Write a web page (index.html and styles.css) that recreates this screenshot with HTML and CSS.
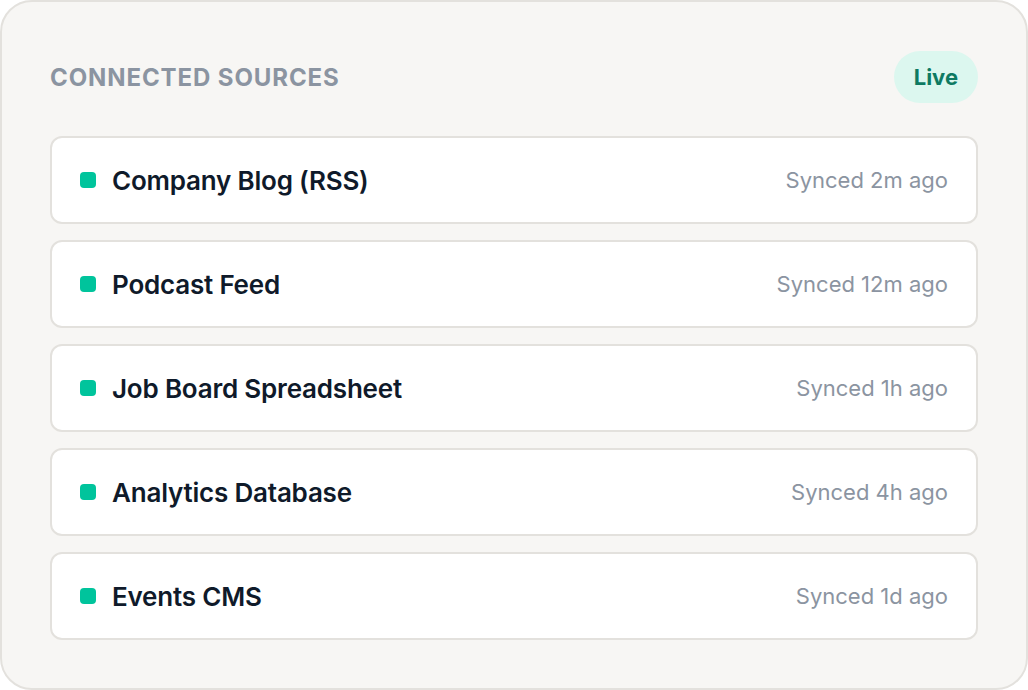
FILE: index.html
```html
<!DOCTYPE html>
<html lang="en">
<head>
<meta charset="utf-8">
<title>Connected Sources</title>
<link rel="stylesheet" href="styles.css">
</head>
<body>
<section class="card">
  <header class="card-header">
    <h2 class="title">CONNECTED SOURCES</h2>
    <span class="badge">Live</span>
  </header>
  <ul class="list">
    <li class="row"><span class="dot"></span><span class="name">Company Blog (RSS)</span><span class="sync">Synced 2m ago</span></li>
    <li class="row"><span class="dot"></span><span class="name">Podcast Feed</span><span class="sync">Synced 12m ago</span></li>
    <li class="row"><span class="dot"></span><span class="name">Job Board Spreadsheet</span><span class="sync">Synced 1h ago</span></li>
    <li class="row"><span class="dot"></span><span class="name">Analytics Database</span><span class="sync">Synced 4h ago</span></li>
    <li class="row"><span class="dot"></span><span class="name">Events CMS</span><span class="sync">Synced 1d ago</span></li>
  </ul>
</section>
</body>
</html>
```
FILE: styles.css
```css
* { box-sizing: border-box; }
html, body { margin: 0; padding: 0; background: #ffffff; }
body { font-family: Inter, "Noto Sans", sans-serif; }
.card {
  width: 1028px;
  height: 690px;
  background: #f7f6f4;
  border: 2px solid #e3e1dd;
  border-radius: 32px;
  padding: 48px;
}
.card-header {
  display: flex;
  align-items: center;
  justify-content: space-between;
  height: 54px;
  margin-bottom: 32px;
}
.title {
  margin: 0;
  font-size: 24px;
  font-weight: 700;
  color: #8b94a1;
  letter-spacing: 0.9px;
}
.badge {
  display: inline-flex;
  align-items: center;
  height: 52px;
  padding: 0 20px;
  border-radius: 26px;
  background: #dcf7ef;
  color: #0e7a62;
  font-size: 22px;
  font-weight: 700;
}
.list {
  list-style: none;
  margin: 0;
  padding: 0;
  display: flex;
  flex-direction: column;
  gap: 16px;
}
.row {
  display: flex;
  align-items: center;
  height: 88px;
  padding: 0 28px;
  background: #ffffff;
  border: 2px solid #e3e1dd;
  border-radius: 12px;
}
.dot {
  width: 16px;
  height: 16px;
  border-radius: 4px;
  background: #00c49c;
  margin-right: 16px;
  flex: none;
}
.name {
  font-size: 26px;
  font-weight: 600;
  letter-spacing: -0.2px;
  color: #0f1a2a;
  flex: 1;
}
.sync {
  font-size: 22px;
  color: #8b94a1;
}
```
